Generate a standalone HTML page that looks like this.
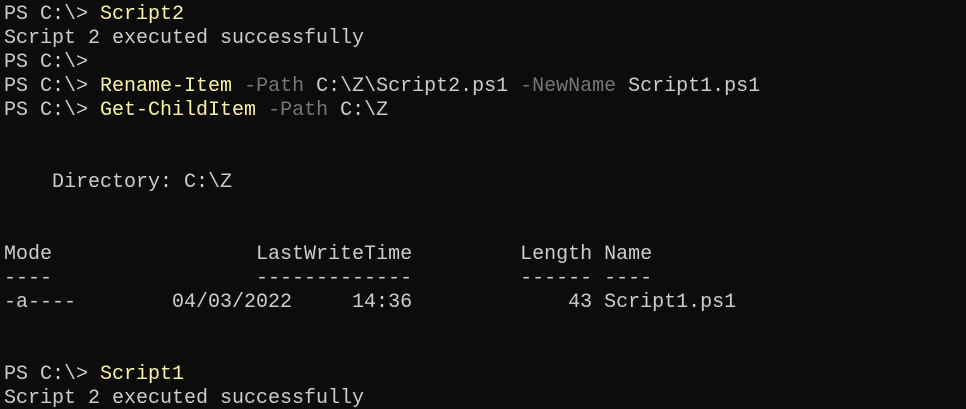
<!DOCTYPE html>
<html><head><meta charset="utf-8"><style>
html,body{margin:0;padding:0;background:#0c0c0c;width:966px;height:409px;overflow:hidden}
pre{margin:0;padding:3px 0 0 4px;font-family:"Liberation Mono","DejaVu Sans Mono",monospace;font-size:20px;line-height:24px;color:#cccccc}
.y{color:#f9f1a5}.g{color:#767676}
</style></head><body><pre>PS C:\&gt; <span class="y">Script2</span>
Script 2 executed successfully
PS C:\&gt;
PS C:\&gt; <span class="y">Rename-Item</span> <span class="g">-Path</span> C:\Z\Script2.ps1 <span class="g">-NewName</span> Script1.ps1
PS C:\&gt; <span class="y">Get-ChildItem</span> <span class="g">-Path</span> C:\Z


    Directory: C:\Z


Mode                 LastWriteTime         Length Name
----                 -------------         ------ ----
-a----        04/03/2022     14:36             43 Script1.ps1


PS C:\&gt; <span class="y">Script1</span>
Script 2 executed successfully</pre></body></html>
